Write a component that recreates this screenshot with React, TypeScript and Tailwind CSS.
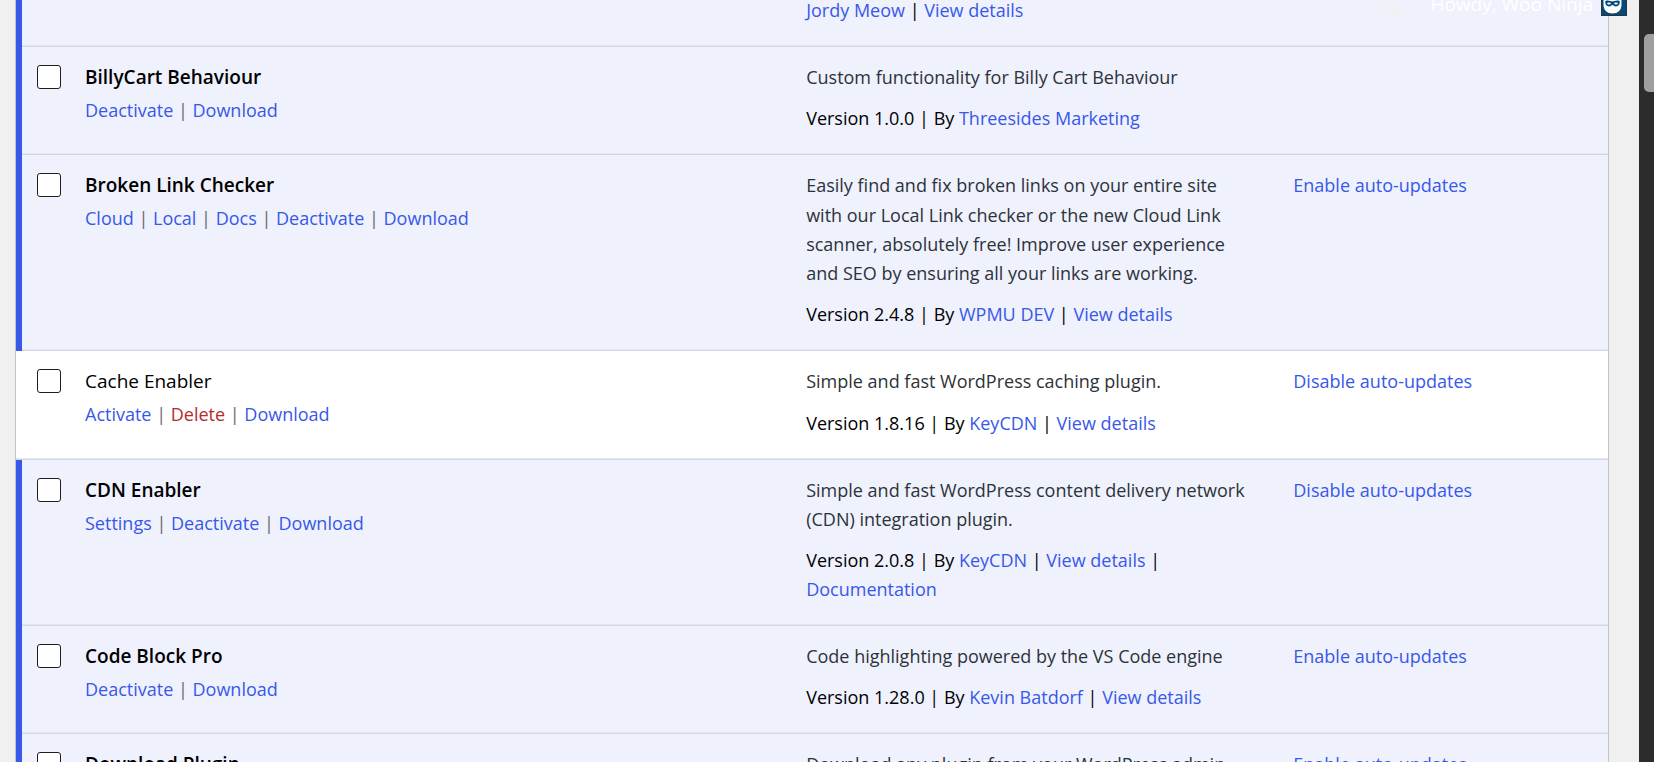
import React from "react";

type Action = { label: string; danger?: boolean };
type Plugin = {
  name: string;
  active: boolean;
  actions: Action[];
  description: string;
  version?: string;
  author?: string;
  meta?: string[];
  autoUpdate?: "Enable" | "Disable";
};

const plugins: Plugin[] = [
  {
    name: "BillyCart Behaviour",
    active: true,
    actions: [{ label: "Deactivate" }, { label: "Download" }],
    description: "Custom functionality for Billy Cart Behaviour",
    version: "1.0.0",
    author: "Threesides Marketing",
  },
  {
    name: "Broken Link Checker",
    active: true,
    actions: [
      { label: "Cloud" },
      { label: "Local" },
      { label: "Docs" },
      { label: "Deactivate" },
      { label: "Download" },
    ],
    description:
      "Easily find and fix broken links on your entire site with our Local Link checker or the new Cloud Link scanner, absolutely free! Improve user experience and SEO by ensuring all your links are working.",
    version: "2.4.8",
    author: "WPMU DEV",
    meta: ["View details"],
    autoUpdate: "Enable",
  },
  {
    name: "Cache Enabler",
    active: false,
    actions: [{ label: "Activate" }, { label: "Delete", danger: true }, { label: "Download" }],
    description: "Simple and fast WordPress caching plugin.",
    version: "1.8.16",
    author: "KeyCDN",
    meta: ["View details"],
    autoUpdate: "Disable",
  },
  {
    name: "CDN Enabler",
    active: true,
    actions: [{ label: "Settings" }, { label: "Deactivate" }, { label: "Download" }],
    description: "Simple and fast WordPress content delivery network (CDN) integration plugin.",
    version: "2.0.8",
    author: "KeyCDN",
    meta: ["View details", "Documentation"],
    autoUpdate: "Disable",
  },
  {
    name: "Code Block Pro",
    active: true,
    actions: [{ label: "Deactivate" }, { label: "Download" }],
    description: "Code highlighting powered by the VS Code engine",
    version: "1.28.0",
    author: "Kevin Batdorf",
    meta: ["View details"],
    autoUpdate: "Enable",
  },
  {
    name: "Download Plugin",
    active: true,
    actions: [],
    description: "Download any plugin from your WordPress admin",
    autoUpdate: "Enable",
  },
];

const rule = "shadow-[inset_0_-1px_0_#d4d6e1,inset_0_-2px_0_#e4e6f0]";
const ruleWithBar =
  "shadow-[inset_6px_0_0_#3858e9,inset_0_-1px_0_#d4d6e1,inset_0_-2px_0_#e4e6f0]";

function Link({ children, danger }: { children: React.ReactNode; danger?: boolean }) {
  return (
    <a href="#" className={danger ? "text-[#b32d2e]" : "text-[#3858e9]"}>
      {children}
    </a>
  );
}

function PluginRow({ plugin }: { plugin: Plugin }) {
  const id = plugin.name.toLowerCase().replace(/\s+/g, "-");
  return (
    <tr className={plugin.active ? "bg-[#eff1fd] align-top" : "bg-white align-top"}>
      <td className={`pt-[18px] pl-[21px] ${plugin.active ? ruleWithBar : rule}`}>
        <input
          id={id}
          type="checkbox"
          className="block size-6 appearance-none rounded-[3px] border border-[#1e1e1e] bg-white"
        />
      </td>
      <td className={`px-[15px] pt-4 pb-[22px] ${rule}`}>
        <label
          htmlFor={id}
          className={plugin.active ? "block text-[19px] leading-[29px] font-semibold text-black" : "block text-[19px] leading-[29px] text-black"}
        >
          {plugin.name}
        </label>
        <div className="mt-1 text-[#646970]">
          {plugin.actions.map((action, i) => (
            <React.Fragment key={action.label}>
              {i > 0 && " | "}
              <Link danger={action.danger}>{action.label}</Link>
            </React.Fragment>
          ))}
        </div>
      </td>
      <td className={`pt-4 pr-7 pb-[22px] pl-[15px] ${rule}`}>
        <p className="leading-relaxed text-[#2c3338]">{plugin.description}</p>
        {plugin.version && (
          <p className="mt-3 text-black">
            Version {plugin.version} | By <Link>{plugin.author}</Link>
            {plugin.meta?.map((item) => (
              <React.Fragment key={item}>
                {" | "}
                <Link>{item}</Link>
              </React.Fragment>
            ))}
          </p>
        )}
      </td>
      <td className={`px-[15px] pt-4 ${rule}`}>
        {plugin.autoUpdate && <Link>{plugin.autoUpdate} auto-updates</Link>}
      </td>
    </tr>
  );
}

function Sparkles() {
  return (
    <svg viewBox="0 0 30 20" className="h-5 w-[30px]" fill="none" stroke="#f0f0f1" strokeWidth="2" aria-hidden="true">
      <path d="M1 2l6 2 4 8 4-8 6-2" />
      <path d="M22 8l1.500 3.500L27 13l-3.500 1.500L22 18l-1.500-3.500L17 13l3.500-1.500z" />
    </svg>
  );
}

function Avatar() {
  return (
    <svg viewBox="0 0 26 16" className="h-4 w-[26px]" aria-hidden="true">
      <rect width="26" height="16" fill="#2c3338" />
      <rect x="1" width="24" height="15" fill="#034a78" />
      <path d="M2.500 0h18v5c0 5-4 8.500-9 8.500s-9-3.500-9-8.500z" fill="#fff" />
      <path d="M4.500 1c3-1.200 5 .5 7 .5s4-1.700 7-.5c.8 3-.6 5.500-3.500 5.500-1.800 0-2.500-1.500-3.500-1.500s-1.700 1.500-3.500 1.500c-2.900 0-4.300-2.500-3.500-5.500z" fill="#034a78" />
      <ellipse cx="8" cy="3.500" rx="1.900" ry="1" fill="#fff" />
      <ellipse cx="15" cy="3.500" rx="1.900" ry="1" fill="#fff" />
    </svg>
  );
}

export default function App() {
  return (
    <div className="relative flex h-screen overflow-hidden bg-[#f0f0f1] font-['Open_Sans','Noto_Sans',sans-serif] text-[18px] leading-[29px]">
      <main className="min-w-0 flex-1 pr-[30px] pl-[15px]">
        <div className="-mt-1 border-x border-[#c3c4c7]">
          <table className="w-full table-fixed border-separate border-spacing-0">
            <colgroup>
              <col className="w-[54px]" />
              <col className="w-[45.3%]" />
              <col className="w-[30.6%]" />
              <col />
            </colgroup>
            <tbody>
              <tr className="bg-[#eff1fd] align-top">
                <td className={ruleWithBar} />
                <td className={rule} />
                <td className={`pr-7 pb-[22px] pl-[15px] text-black ${rule}`}>
                  <Link>Jordy Meow</Link> | <Link>View details</Link>
                </td>
                <td className={rule} />
              </tr>
              {plugins.map((plugin) => (
                <PluginRow key={plugin.name} plugin={plugin} />
              ))}
            </tbody>
          </table>
        </div>
      </main>
      <div className="absolute top-0 right-[27px] flex items-start">
        <Sparkles />
        <span className="-mt-[10px] ml-[26px] text-[19px] font-medium text-white">Howdy, Woo Ninja</span>
        <span className="ml-2">
          <Avatar />
        </span>
      </div>
      <div className="flex w-[15px] justify-end bg-[#2c2c2c] pt-[34px]">
        <div className="h-[58px] w-[10px] rounded-l-[5px] bg-[#9f9f9f]" />
      </div>
    </div>
  );
}
